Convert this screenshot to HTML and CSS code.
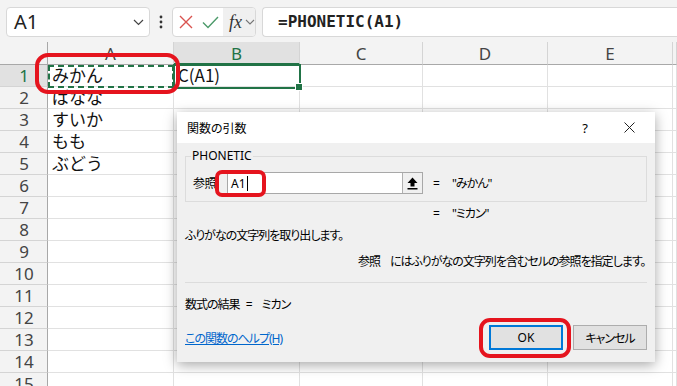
FILE: index.html
```html
<!DOCTYPE html>
<html lang="ja">
<head>
<meta charset="utf-8">
<link rel="stylesheet" href="styles.css">
</head>
<body>
<div class="toolbar">
  <div class="namebox"><span>A1</span>
    <svg width="11" height="7" viewBox="0 0 11 7"><path d="M1 1l4.5 4.5L10 1" fill="none" stroke="#444" stroke-width="1.2"/></svg>
  </div>
  <div class="dots"><svg width="4" height="14" viewBox="0 0 4 14"><circle cx="2" cy="2" r="1.4" fill="#333"/><circle cx="2" cy="7" r="1.4" fill="#333"/><circle cx="2" cy="12" r="1.4" fill="#333"/></svg></div>
  <div class="fbtns">
    <span class="fb"><svg width="14" height="14" viewBox="0 0 14 14"><path d="M1 1l12 12M13 1L1 13" stroke="#d9534f" stroke-width="1.4" fill="none"/></svg></span>
    <span class="fb"><svg width="17" height="13" viewBox="0 0 17 13"><path d="M1 6.5l5 5L16 1" stroke="#4c9a6a" stroke-width="1.4" fill="none"/></svg></span>
    <span class="fx"><i>fx</i><svg width="10" height="6" viewBox="0 0 10 6"><path d="M1 1l4 4 4-4" fill="none" stroke="#777" stroke-width="1.1"/></svg></span>
  </div>
  <div class="finput">=PHONETIC(A1)</div>
</div>

<div class="sheet">
  <div class="hd corner"></div><div class="hd">A</div><div class="hd sel">B</div><div class="hd">C</div><div class="hd">D</div><div class="hd">E</div><div class="hd"></div>
  <div class="rh sel">1</div><div class="c big">みかん</div><div class="c big">C(A1)</div><div class="c"></div><div class="c"></div><div class="c"></div><div class="c"></div>
  <div class="rh">2</div><div class="c big">ばなな</div><div class="c"></div><div class="c"></div><div class="c"></div><div class="c"></div><div class="c"></div>
  <div class="rh">3</div><div class="c big">すいか</div><div class="c"></div><div class="c"></div><div class="c"></div><div class="c"></div><div class="c"></div>
  <div class="rh">4</div><div class="c big">もも</div><div class="c"></div><div class="c"></div><div class="c"></div><div class="c"></div><div class="c"></div>
  <div class="rh">5</div><div class="c big">ぶどう</div><div class="c"></div><div class="c"></div><div class="c"></div><div class="c"></div><div class="c"></div>
  <div class="rh">6</div><div class="c"></div><div class="c"></div><div class="c"></div><div class="c"></div><div class="c"></div><div class="c"></div>
  <div class="rh">7</div><div class="c"></div><div class="c"></div><div class="c"></div><div class="c"></div><div class="c"></div><div class="c"></div>
  <div class="rh">8</div><div class="c"></div><div class="c"></div><div class="c"></div><div class="c"></div><div class="c"></div><div class="c"></div>
  <div class="rh">9</div><div class="c"></div><div class="c"></div><div class="c"></div><div class="c"></div><div class="c"></div><div class="c"></div>
  <div class="rh">10</div><div class="c"></div><div class="c"></div><div class="c"></div><div class="c"></div><div class="c"></div><div class="c"></div>
  <div class="rh">11</div><div class="c"></div><div class="c"></div><div class="c"></div><div class="c"></div><div class="c"></div><div class="c"></div>
  <div class="rh">12</div><div class="c"></div><div class="c"></div><div class="c"></div><div class="c"></div><div class="c"></div><div class="c"></div>
  <div class="rh">13</div><div class="c"></div><div class="c"></div><div class="c"></div><div class="c"></div><div class="c"></div><div class="c"></div>
  <div class="rh">14</div><div class="c"></div><div class="c"></div><div class="c"></div><div class="c"></div><div class="c"></div><div class="c"></div>
  <div class="rh">15</div><div class="c"></div><div class="c"></div><div class="c"></div><div class="c"></div><div class="c"></div><div class="c"></div>
</div>

<div class="copy-ants"></div>
<div class="active-cell"><span class="handle"></span></div>

<div class="dialog">
  <div class="dtitle">
    <span class="ttext">関数の引数</span>
    <span class="tq">?</span>
    <span class="tx"><svg width="11" height="11" viewBox="0 0 11 11"><path d="M0.5 0.5l10 10M10.5 0.5l-10 10" stroke="#222" stroke-width="1" fill="none"/></svg></span>
  </div>
  <div class="dbody">
    <fieldset class="group">
      <legend>PHONETIC</legend>
      <div class="argrow">
        <span class="lbl">参照</span>
        <div class="arginput"><span class="argtext">A1</span><span class="caret"></span>
          <span class="pick"><svg width="11" height="13" viewBox="0 0 11 13"><path d="M5.5 0.5L10.5 6H7.5V9.5H3.5V6H0.5Z" fill="#000"/><rect x="0.5" y="11" width="10" height="1.5" fill="#000"/></svg></span>
        </div>
        <span class="eq">=</span><span class="val">"みかん"</span>
      </div>
    </fieldset>
    <div class="res"><span class="eq">=</span><span class="val">"ミカン"</span></div>
    <p class="desc">ふりがなの文字列を取り出します。</p>
    <p class="pdesc"><span class="pname">参照</span>にはふりがなの文字列を含むセルの参照を指定します。</p>
    <div class="sep"></div>
    <p class="formula">数式の結果 <span class="feq">=</span> ミカン</p>
    <div class="dfoot">
      <a class="help">この関数のヘルプ(H)</a>
      <span class="btn ok">OK</span>
      <span class="btn">キャンセル</span>
    </div>
  </div>
</div>

<div class="mark mark-a1"></div>
<div class="mark mark-arg"></div>
<div class="mark mark-ok"></div>
</body>
</html>
```

FILE: styles.css
```css
html, body {
  margin: 0;
  padding: 0;
}
body {
  width: 677px;
  height: 386px;
  overflow: hidden;
  position: relative;
  background: #fff;
  font-family: "Noto Sans", "Noto Sans CJK JP", sans-serif;
}

/* toolbar */
.toolbar {
  height: 42px;
  box-sizing: border-box;
  padding-top: 7px;
  background: #f3f3f3;
  display: flex;
  align-items: flex-start;
}
.namebox {
  margin-left: 6px;
  width: 144px;
  height: 30px;
  box-sizing: border-box;
  background: #fff;
  border: 1px solid #d8d8d8;
  border-radius: 4px;
  display: flex;
  align-items: center;
  justify-content: space-between;
  padding: 0 5px 0 7px;
}
.namebox span {
  font-size: 20px;
  color: #222;
  line-height: 28px;
}
.dots {
  width: 22px;
  height: 30px;
  display: flex;
  align-items: center;
  justify-content: center;
}
.fbtns {
  width: 84px;
  height: 30px;
  box-sizing: border-box;
  background: #fff;
  border: 1px solid #d8d8d8;
  border-radius: 4px;
  display: flex;
  align-items: center;
  overflow: hidden;
}
.fb {
  width: 24px;
  display: flex;
  justify-content: center;
  align-items: center;
  height: 28px;
}
.fb:first-child { margin-left: 1px; }
.fx {
  margin-left: 1px;
  flex: 1;
  height: 28px;
  background: #f0f0f0;
  display: flex;
  align-items: center;
  padding-left: 6px;
  gap: 3px;
}
.fx i {
  font-family: "Liberation Serif", serif;
  font-size: 18px;
  color: #333;
  font-style: italic;
}
.finput {
  margin-left: 6px;
  flex: 1;
  height: 30px;
  box-sizing: border-box;
  background: #fff;
  border: 1px solid #d8d8d8;
  border-right: none;
  border-radius: 4px 0 0 4px;
  padding-left: 15px;
  font-family: "DejaVu Sans Mono", monospace;
  font-weight: bold;
  font-size: 16px;
  line-height: 28px;
  color: #222;
}

/* sheet */
.sheet {
  display: grid;
  grid-template-columns: 48px 126px 126px 123px 125px 125px 1fr;
  grid-template-rows: 23px repeat(15, 22px);
}
.sheet > div {
  box-sizing: border-box;
  border-right: 1px solid #e1e1e1;
  border-bottom: 1px solid #e1e1e1;
}
.hd {
  background: #f3f3f3;
  border-right-color: #d4d4d4 !important;
  border-bottom: 1px solid #a8a8a8 !important;
  text-align: center;
  font-size: 17px;
  line-height: 24px;
  color: #444;
}
.hd.corner {
  border-right-color: #a8a8a8 !important;
}
.hd.sel {
  background: #e1e1e1;
  color: #217346;
  border-bottom: 2px solid #217346 !important;
}
.rh {
  background: #f3f3f3;
  border-right: 1px solid #a8a8a8 !important;
  border-bottom-color: #d4d4d4 !important;
  text-align: center;
  font-size: 17px;
  line-height: 21px;
  color: #444;
  padding-left: 1px;
}
.rh.sel {
  background: #e1e1e1;
  color: #217346;
}
.c.big {
  font-family: "Noto Sans CJK JP", sans-serif;
  font-size: 17px;
  line-height: 20px;
  color: #111;
  padding-left: 4px;
  white-space: nowrap;
}

/* selection overlays */
.copy-ants {
  position: absolute;
  left: 48px;
  top: 65px;
  width: 126px;
  height: 23px;
  box-sizing: border-box;
  border: 2px dashed #217346;
}
.active-cell {
  position: absolute;
  left: 173px;
  top: 64px;
  width: 128px;
  height: 25px;
  box-sizing: border-box;
  border: 2px solid #217346;
}
.handle {
  position: absolute;
  right: -4px;
  bottom: -4px;
  width: 6px;
  height: 6px;
  background: #217346;
  border: 1px solid #fff;
}

/* dialog */
.dialog {
  position: absolute;
  left: 177px;
  top: 112px;
  width: 478px;
  height: 250px;
  background: #f0f0f0;
  box-shadow: 0 3px 12px rgba(0, 0, 0, 0.35);
  font-family: "Noto Sans", "Noto Sans CJK JP", sans-serif;
  font-feature-settings: "palt";
  font-size: 12px;
  letter-spacing: -1px;
  color: #000;
  white-space: nowrap;
}
.dtitle {
  height: 31px;
  background: #fff;
  display: flex;
  align-items: center;
  padding-left: 10px;
}
.ttext {
  flex: 1;
  font-size: 12px;
  letter-spacing: 0;
}
.tq {
  width: 20px;
  text-align: center;
  margin-right: 29px;
  font-size: 13px;
  letter-spacing: 0;
}
.tx {
  width: 12px;
  display: flex;
  margin-right: 19px;
}
.dbody {
  padding: 5px 8px 0 8px;
}
.group {
  margin: 0;
  border: 1px solid #dcdcdc;
  padding: 8px 6px 5px 7px;
  height: 54px;
  box-sizing: border-box;
}
.group legend {
  padding: 0 1px;
  margin-left: -2px;
  font-size: 12px;
  line-height: 16px;
  letter-spacing: 0;
}
.argrow {
  display: flex;
  align-items: center;
  height: 22px;
}
.lbl {
  width: 34px;
  letter-spacing: -0.5px;
}
.arginput {
  width: 196px;
  height: 22px;
  box-sizing: border-box;
  background: #fff;
  border: 1px solid #a8a8a8;
  display: flex;
  align-items: center;
  padding-left: 3px;
  font-size: 12px;
  letter-spacing: 0;
}
.caret {
  width: 1px;
  height: 15px;
  background: #000;
  margin-left: 1px;
}
.pick {
  margin-left: auto;
  width: 20px;
  height: 20px;
  box-sizing: border-box;
  border-left: 1px solid #b0b0b0;
  background: #f0f0f0;
  display: flex;
  align-items: center;
  justify-content: center;
}
.eq {
  margin-left: 10px;
  width: 19px;
}
.res {
  margin-top: 4px;
  padding-left: 248px;
  display: flex;
  height: 16px;
  line-height: 16px;
}
.res .eq { margin-left: 0; }
.desc, .pdesc, .formula {
  margin: 0;
  line-height: 16px;
}
.desc {
  margin-top: 6px;
}
.pdesc {
  margin-top: 10px;
  padding-left: 173px;
}
.pname {
  margin-right: 10px;
}
.sep {
  margin-top: 12px;
  height: 1px;
  background: #dcdcdc;
}
.formula {
  margin-top: 14px;
}
.feq {
  margin: 0 8px 0 4px;
}
.dfoot {
  margin-top: 12px;
  display: flex;
  align-items: center;
  gap: 10px;
}
.help {
  color: #0066cc;
  text-decoration: underline;
  margin-right: auto;
}
.btn {
  width: 74px;
  height: 25px;
  box-sizing: border-box;
  border: 1px solid #adadad;
  background: #e1e1e1;
  display: flex;
  align-items: center;
  justify-content: center;
}
.btn.ok {
  border: 2px solid #0078d7;
  letter-spacing: 0;
}

/* red annotation marks */
.mark {
  position: absolute;
  box-sizing: border-box;
  border: 4px solid #e5141e;
}
.mark-a1 {
  left: 35px;
  top: 53px;
  width: 145px;
  height: 41px;
  border-radius: 13px;
}
.mark-arg {
  left: 215px;
  top: 170px;
  width: 51px;
  height: 27px;
  border-radius: 7px;
}
.mark-ok {
  left: 479px;
  top: 318px;
  width: 92px;
  height: 40px;
  border-radius: 11px;
}
```
